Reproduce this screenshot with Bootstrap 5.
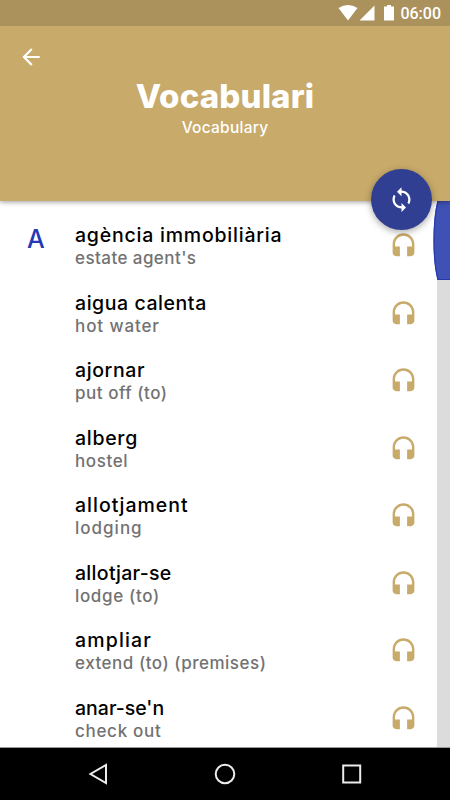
<!DOCTYPE html>
<html lang="ca">
<head>
<meta charset="utf-8">
<meta name="viewport" content="width=device-width, initial-scale=1">
<title>Vocabulari</title>
<link href="https://cdn.jsdelivr.net/npm/bootstrap@5.3.0/dist/css/bootstrap.min.css" rel="stylesheet">
<style>
  body { font-family: Inter, "Open Sans", sans-serif; background: #fff; }
  .screen { width: 450px; height: 800px; }
  .statusbar { height: 26px; background: #ab915c; font: 500 16px/28px Roboto, sans-serif; padding-right: 9px; z-index: 3; }
  .clock { padding-top: 1px; }
  .hero { height: 175px; background: #c8aa6a; box-shadow: 0 1px 5px rgba(0,0,0,.4); z-index: 2; }
  .back { left: 17.5px; top: 18px; }
  .hero-title { font-size: 33px; line-height: 40px; font-weight: 800; padding-top: 50px; letter-spacing: .15px; }
  .hero-sub { font-size: 15.5px; line-height: 20px; font-weight: 500; margin-top: 2px; letter-spacing: .25px; }
  .fab { width: 61px; height: 61px; left: 371px; top: 143px; background: #313f92; box-shadow: 0 2px 7px rgba(0,0,0,.35); }
  .word-list { padding-top: 22px; }
  .word-row { height: 67.5px; padding-right: 15.5px; }
  .letter { width: 75px; padding-left: 27px; font-size: 25px; line-height: 32px; font-weight: 500; color: #2339b8; }
  .term { font-size: 19.5px; line-height: 24px; font-weight: 500; color: #000; }
  .gloss { font-size: 17px; line-height: 22px; font-weight: 500; color: #727272; }
  .phones { margin-top: 9px; }
  .track { width: 17px; }
  .track-bed { width: 13px; background: #dcdcdc; }
  .navkeys { height: 53px; border-top: 1px solid #999; z-index: 3; }

  /* letter tracking of each entry */
  .word-row:nth-child(1) .term { letter-spacing: .78px; }
  .word-row:nth-child(2) .term { letter-spacing: .56px; }
  .word-row:nth-child(3) .term { letter-spacing: .6px; }
  .word-row:nth-child(4) .term { letter-spacing: .7px; }
  .word-row:nth-child(5) .term { letter-spacing: 1px; }
  .word-row:nth-child(6) .term { letter-spacing: .3px; }
  .word-row:nth-child(7) .term { letter-spacing: 1.15px; }
  .word-row:nth-child(8) .term { letter-spacing: 0; }
  .word-row:nth-child(1) .gloss { letter-spacing: .43px; }
  .word-row:nth-child(2) .gloss { letter-spacing: .9px; }
  .word-row:nth-child(3) .gloss { letter-spacing: .53px; }
  .word-row:nth-child(4) .gloss { letter-spacing: .6px; }
  .word-row:nth-child(5) .gloss { letter-spacing: 1px; }
  .word-row:nth-child(6) .gloss { letter-spacing: .65px; }
  .word-row:nth-child(7) .gloss { letter-spacing: .52px; }
  .word-row:nth-child(8) .gloss { letter-spacing: .7px; }
</style>
</head>
<body>
<svg class="d-none"><symbol id="phones" viewBox="0 0 24 24"><path fill="#c8aa6a" d="M12 1c-4.97 0-9 4.03-9 9v7c0 1.66 1.34 3 3 3h3v-8H5v-2c0-3.87 3.13-7 7-7s7 3.13 7 7v2h-4v8h3c1.66 0 3-1.34 3-3v-7c0-4.97-4.03-9-9-9z"/></symbol></svg>
<div class="screen d-flex flex-column overflow-hidden">
  <div class="statusbar position-relative d-flex justify-content-end align-items-center text-white flex-shrink-0">
    <svg width="62" height="26" fill="#fff"><path d="M.5 8Q10 2 19.500 8L10 20.500zM36.500 5.500V20.500H21.500zM46 6.500h3V5h4v1.500h3V20.500h-10z"/></svg>
    <span class="clock">06:00</span>
  </div>
  <header class="hero position-relative text-white text-center flex-shrink-0">
    <svg class="back position-absolute" width="26" height="26" viewBox="0 0 24 24" fill="#fff"><path d="M20 11H7.830l5.590-5.590L12 4l-8 8 8 8 1.410-1.410L7.830 13H20v-2z"/></svg>
    <h1 class="hero-title m-0">Vocabulari</h1>
    <div class="hero-sub">Vocabulary</div>
    <button class="fab position-absolute rounded-circle border-0 p-0 d-flex align-items-center justify-content-center" aria-label="Sync">
      <svg width="27" height="27" viewBox="0 0 24 24" fill="#fff"><path d="M12 4V1L8 5l4 4V6c3.310 0 6 2.690 6 6 0 1.010-.25 1.970-.7 2.800l1.460 1.460C19.540 15.030 20 13.570 20 12c0-4.420-3.580-8-8-8zm0 14c-3.310 0-6-2.690-6-6 0-1.010.25-1.970.7-2.800L5.240 7.740C4.460 8.970 4 10.430 4 12c0 4.420 3.580 8 8 8v3l4-4-4-4v3z"/></svg>
    </button>
  </header>
  <main class="d-flex flex-grow-1 overflow-hidden">
    <div class="word-list flex-grow-1" id="words"></div>
    <div class="track position-relative d-flex justify-content-end">
      <div class="track-bed"></div>
      <svg class="position-absolute top-0 end-0" width="17" height="79"><path fill="#3f51b5" d="M17 0H4.500C-.8 20-.8 59 4.500 79H17z"/><path fill="none" stroke="#2339b0" stroke-width="1.200" d="M5 0C-.3 20-.3 59 5 78.500H17"/></svg>
    </div>
  </main>
  <nav class="navkeys bg-black flex-shrink-0">
    <svg width="450" height="51" fill="none" stroke="#ececec" stroke-width="2"><path d="M106 17v18L90.500 26z"/><circle cx="225" cy="26" r="9.300"/><rect x="343.200" y="17.500" width="17" height="17"/></svg>
  </nav>
</div>
<script src="https://cdn.jsdelivr.net/npm/bootstrap@5.3.0/dist/js/bootstrap.bundle.min.js"></script>
<script>
  const words = [
    ["agència immobiliària", "estate agent's"], ["aigua calenta", "hot water"],
    ["ajornar", "put off (to)"], ["alberg", "hostel"], ["allotjament", "lodging"],
    ["allotjar-se", "lodge (to)"], ["ampliar", "extend (to) (premises)"], ["anar-se'n", "check out"]
  ];
  document.getElementById("words").innerHTML = words.map(([term, gloss], i) => `
    <div class="word-row d-flex">
      <div class="letter flex-shrink-0">${i ? "" : "A"}</div>
      <div class="flex-grow-1 text-nowrap">
        <div class="term">${term}</div>
        <div class="gloss">${gloss}</div>
      </div>
      <svg class="phones flex-shrink-0" width="29" height="29"><use href="#phones"/></svg>
    </div>`).join("");
</script>
</body>
</html>
